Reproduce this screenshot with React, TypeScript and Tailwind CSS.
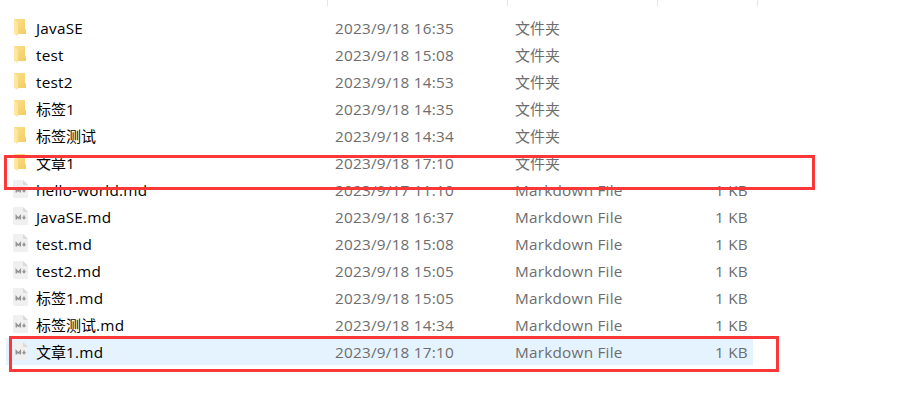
type Entry = { name: string; date: string; folder?: boolean; selected?: boolean };

const entries: Entry[] = [
  { name: "JavaSE", date: "2023/9/18 16:35", folder: true },
  { name: "test", date: "2023/9/18 15:08", folder: true },
  { name: "test2", date: "2023/9/18 14:53", folder: true },
  { name: "标签1", date: "2023/9/18 14:35", folder: true },
  { name: "标签测试", date: "2023/9/18 14:34", folder: true },
  { name: "文章1", date: "2023/9/18 17:10", folder: true },
  { name: "hello-world.md", date: "2023/9/17 11:10" },
  { name: "JavaSE.md", date: "2023/9/18 16:37" },
  { name: "test.md", date: "2023/9/18 15:08" },
  { name: "test2.md", date: "2023/9/18 15:05" },
  { name: "标签1.md", date: "2023/9/18 15:05" },
  { name: "标签测试.md", date: "2023/9/18 14:34" },
  { name: "文章1.md", date: "2023/9/18 17:10", selected: true },
];

function FolderIcon() {
  return (
    <svg width="16" height="19" viewBox="0 0 16 19" className="block">
      <defs>
        <linearGradient id="folderBack" x1="0" y1="0" x2="1" y2="1">
          <stop offset="0" stopColor="#fbe08c" />
          <stop offset="1" stopColor="#f3cc63" />
        </linearGradient>
        <linearGradient id="folderFlap" x1="0" y1="0" x2="1" y2="0">
          <stop offset="0" stopColor="#ffe9a6" />
          <stop offset="1" stopColor="#fee49a" />
        </linearGradient>
      </defs>
      <path d="M1 1H12V11L13 11.5V16H1Z" fill="url(#folderBack)" />
      <path d="M1 1.3L4.2 3.8Q5 4.6 5 5.4V18L1.6 16.2Q1 15.9 1 15.3Z" fill="url(#folderFlap)" />
    </svg>
  );
}

function MarkdownIcon() {
  return (
    <svg width="16" height="19" viewBox="0 0 16 19" className="block">
      <path d="M1.2 0H10L15 5V16.5Q15 18 13.5 18H1.5Q0 18 0 16.5V1.2Q0 0 1.2 0Z" fill="#f0f0f0" />
      <path d="M10 0L15 5H11Q10 5 10 4Z" fill="#dadada" />
      <path d="M3.3 12.6V9L5.3 11.2L7.3 9V12.6M11 8.4V11.5" fill="none" stroke="#929292" strokeWidth="1.5" />
      <path d="M8.8 10.2H13.2L11 12.8Z" fill="#929292" />
    </svg>
  );
}

// Latin runs are tracked slightly wider than the Chinese runs beside them.
function Label({ text }: { text: string }) {
  return (
    <>
      {text.split(/([\u4e00-\u9fff]+)/).filter(Boolean).map((run, i) => (
        <span key={i} className={/[\u4e00-\u9fff]/.test(run) ? "" : "text-[15.3px] tracking-[0.24px]"}>{run}</span>
      ))}
    </>
  );
}

function Row({ entry }: { entry: Entry }) {
  return (
    <div className={`flex h-[27px] w-[747px] items-center pl-[7px] ${entry.selected ? "bg-[#e5f3ff]" : ""}`}>
      <div className="w-[23px] shrink-0">{entry.folder ? <FolderIcon /> : <MarkdownIcon />}</div>
      <div className="flex h-[27px] items-center pt-[2px]">
        <div className="w-[299px] shrink-0 text-black"><Label text={entry.name} /></div>
        <div className="w-[180px] shrink-0"><Label text={entry.date} /></div>
        <div className="w-[150px] shrink-0"><Label text={entry.folder ? "文件夹" : "Markdown File"} /></div>
        <div className="w-[83px] shrink-0 text-right">{!entry.folder && <Label text="1 KB" />}</div>
      </div>
    </div>
  );
}

export default function App() {
  return (
    <main className="relative h-[418px] w-[904px] overflow-hidden bg-white font-['Open_Sans','Noto_Sans_CJK_SC',sans-serif] text-[15px] leading-[27px] whitespace-pre text-[#6d6d6d]">
      <div className="flex h-[14px] pl-[148px]">
        <div className="h-[6px] w-[180px] border-r border-[#e5e5e5]" />
        <div className="h-[6px] w-[180px] border-r border-[#e5e5e5]" />
        <div className="h-[6px] w-[150px] border-r border-[#e5e5e5]" />
        <div className="h-[6px] w-[100px] border-r border-[#e5e5e5]" />
      </div>
      <div className="pl-[6px]">
        {entries.map((entry) => <Row key={entry.name} entry={entry} />)}
      </div>
      <div className="absolute top-[155px] left-[4px] h-[35px] w-[811px] border-3 border-[#fb3838]" />
      <div className="absolute top-[336px] left-[9px] h-[36px] w-[770px] border-3 border-[#fb3838]" />
    </main>
  );
}
